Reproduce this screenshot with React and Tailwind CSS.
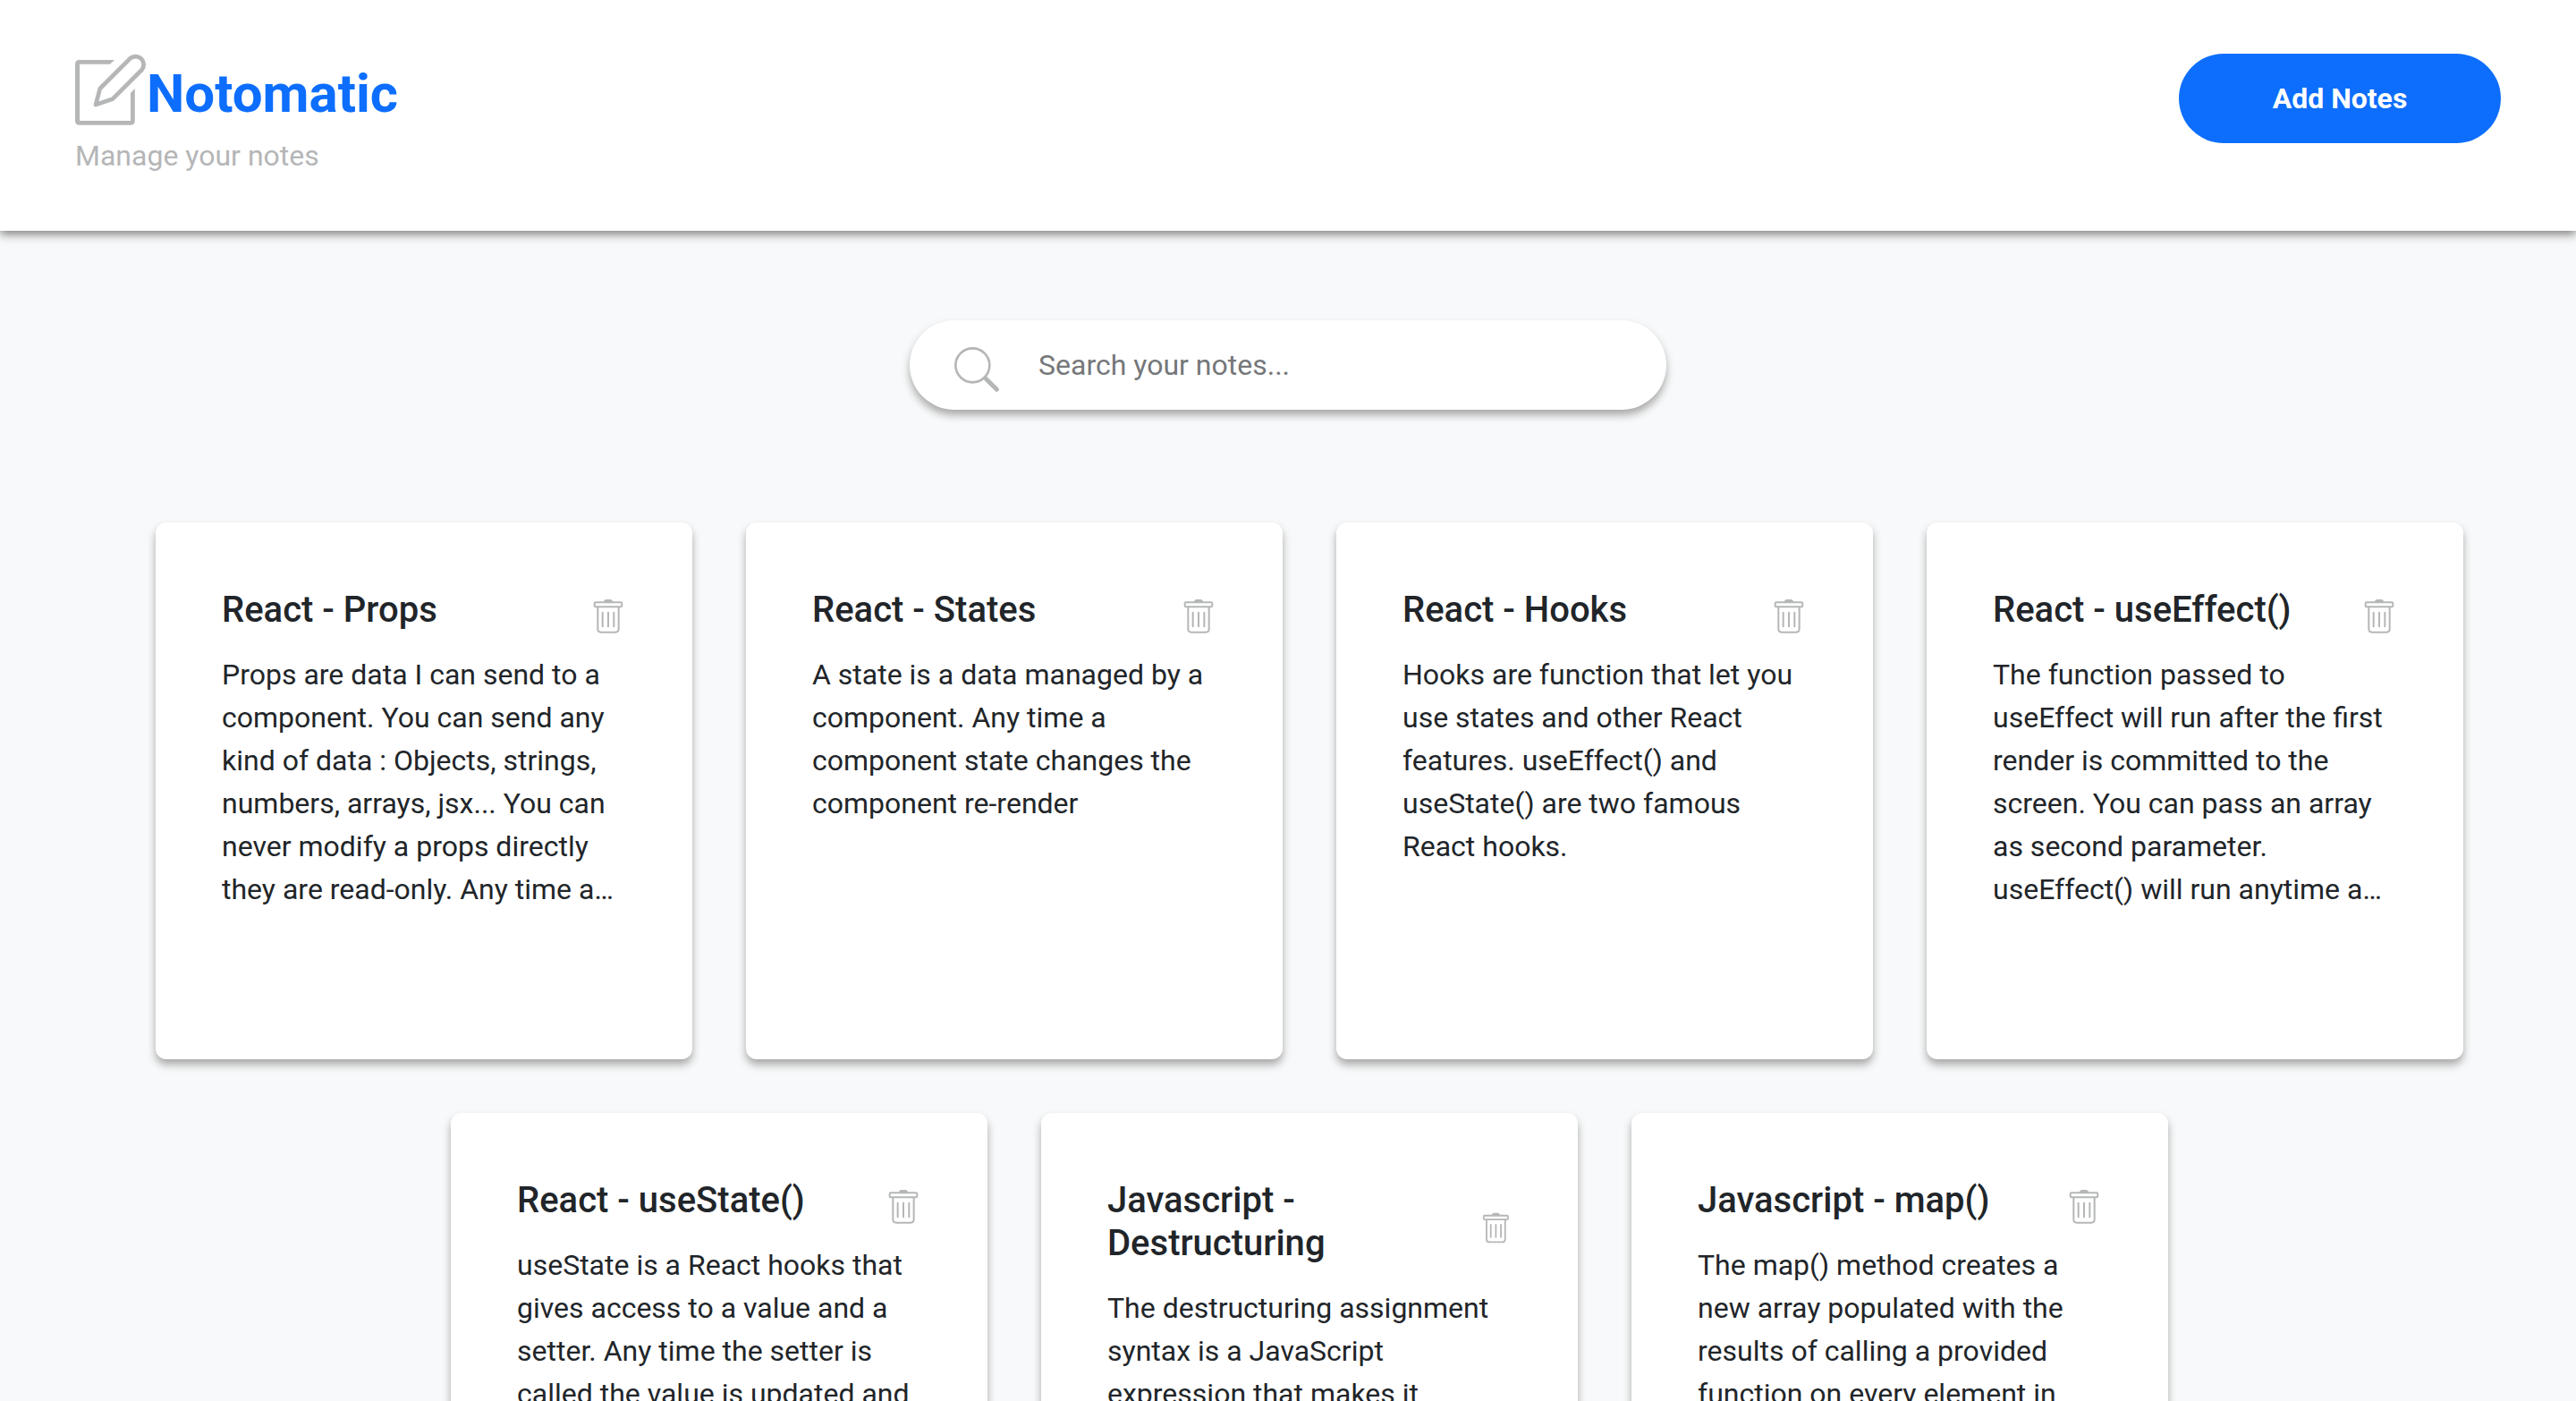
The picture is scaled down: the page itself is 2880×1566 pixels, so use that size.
import React, { useState } from "react";

const NOTES = [
  {
    title: "React - Props",
    content:
      "Props are data I can send to a component. You can send any kind of data : Objects, strings, numbers, arrays, jsx... You can never modify a props directly they are read-only. Any time a component props changes the component re-render.",
  },
  {
    title: "React - States",
    content:
      "A state is a data managed by a component. Any time a component state changes the component re-render",
  },
  {
    title: "React - Hooks",
    content:
      "Hooks are function that let you use states and other React features. useEffect() and useState() are two famous React hooks.",
  },
  {
    title: "React - useEffect()",
    content:
      "The function passed to useEffect will run after the first render is committed to the screen. You can pass an array as second parameter. useEffect() will run anytime a dependency of this array changes.",
  },
  {
    title: "React - useState()",
    content:
      "useState is a React hooks that gives access to a value and a setter. Any time the setter is called the value is updated and the component re-render.",
  },
  {
    title: "Javascript - Destructuring",
    content:
      "The destructuring assignment syntax is a JavaScript expression that makes it possible to unpack values from arrays into distinct variables.",
  },
  {
    title: "Javascript - map()",
    content:
      "The map() method creates a new array populated with the results of calling a provided function on every element in the calling array.",
  },
];

function EditIcon({ className }) {
  return (
    <svg viewBox="75 62 236 236" className={className} aria-hidden="true">
      <path
        fill="currentColor"
        d="M205 83H89Q75 83 75 97V283Q75 297 89 297H258Q272 297 272 283V177L258 192V283H90V97H190Z"
      />
      <path
        fill="none"
        stroke="currentColor"
        strokeWidth="14"
        strokeLinejoin="round"
        d="M143 230L157 177L257 77A27 27 0 0 1 295 115L198 212Z"
      />
    </svg>
  );
}

function SearchIcon({ className }) {
  return (
    <svg viewBox="201 144 150 150" className={className} aria-hidden="true">
      <circle cx="262" cy="205" r="57" fill="none" stroke="currentColor" strokeWidth="8" />
      <path
        d="M305 248L343 286"
        fill="none"
        stroke="currentColor"
        strokeWidth="15"
        strokeLinecap="round"
      />
    </svg>
  );
}

function TrashIcon({ className }) {
  return (
    <svg viewBox="48 24 132 132" className={className} aria-hidden="true">
      <path fill="currentColor" d="M104 39Q106 30 112 30H128Q134 30 136 39Z" />
      <g fill="none" stroke="currentColor" strokeWidth="6">
        <rect x="74" y="40" width="92" height="15" rx="4" />
        <path d="M85 56V129Q85 140 96 140H144Q155 140 155 129V56" />
        <path strokeLinecap="round" d="M101 74V121M120 74V121M139 74V121" />
      </g>
    </svg>
  );
}

function Header() {
  return (
    <header className="relative flex items-start justify-between bg-white px-[84px] pt-[60px] pb-[60px] shadow-[0_4px_10px_#808080]">
      <div>
        <div className="flex items-start text-[#b5b6b7]">
          <EditIcon className="size-20" />
          <h1 className="text-[60px] leading-[90px] font-bold text-[#0d6efd]">Notomatic</h1>
        </div>
        <p className="text-[32px] leading-[48px] text-[#b5b6b7]">Manage your notes</p>
      </div>
      <button
        type="button"
        className="h-[100px] w-[360px] rounded-full bg-[#0d6efd] text-[32px] leading-[48px] font-bold text-white"
      >
        Add Notes
      </button>
    </header>
  );
}

function SearchBar({ value, onChange }) {
  return (
    <label className="mx-auto flex h-[100px] w-full max-w-[846px] items-start rounded-full bg-white px-[50px] shadow-[0_6px_10px_#a8a8a8]">
      <span className="sr-only">Search notes</span>
      <SearchIcon className="mt-[30px] size-[50px] shrink-0 text-[#b5b6b7]" />
      <input
        type="text"
        value={value}
        onChange={(e) => onChange(e.target.value)}
        placeholder="Search your notes..."
        className="ml-11 h-full min-w-0 flex-1 bg-transparent text-[32px] leading-[48px] outline-none placeholder:text-[#75777a]"
      />
    </label>
  );
}

function NoteCard({ title, content }) {
  return (
    <li className="h-[600px] w-[600px] rounded-xl bg-white p-[74px] shadow-[0_6px_10px_#a8a8a8]">
      <div className="mb-2 flex items-center justify-between">
        <h2 className="mb-4 text-[40px] leading-[48px] font-medium">{title}</h2>
        <button type="button" aria-label={`Delete ${title}`} className="w-11 min-w-0 text-[#b5b6b7]">
          <TrashIcon className="w-full" />
        </button>
      </div>
      <p className="line-clamp-6 text-[32px] leading-[48px]">{content}</p>
    </li>
  );
}

export default function App() {
  const [query, setQuery] = useState("");
  const notes = NOTES.filter((n) => n.title.toLowerCase().includes(query.toLowerCase()));
  return (
    <div className="min-h-screen bg-[#f8f9fa] font-[Roboto,sans-serif] text-[#212529]">
      <Header />
      <main className="pt-[100px] pb-[60px]">
        <SearchBar value={query} onChange={setQuery} />
        <ul className="mt-[126px] flex flex-wrap justify-center gap-[60px] pl-12">
          {notes.map((n) => (
            <NoteCard key={n.title} {...n} />
          ))}
        </ul>
      </main>
    </div>
  );
}
